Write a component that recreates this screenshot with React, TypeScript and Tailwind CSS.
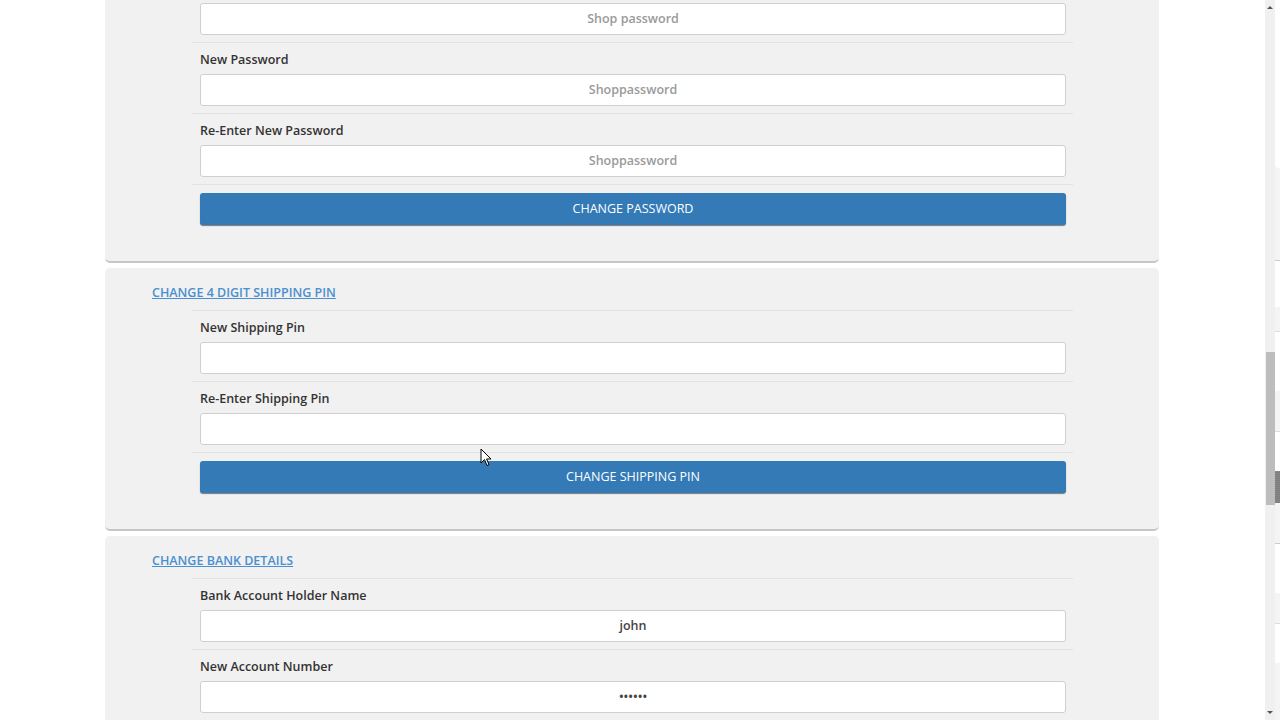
import type { ReactNode } from 'react';

const font = { fontFamily: '"Open Sans", "Noto Sans", sans-serif' };

function Row({ label, children }: { label?: string; children: ReactNode }) {
  return (
    <div className="border-t border-[#e2e2e2] pl-2 pr-[7px] pt-2 pb-[7px]">
      <p className="mb-[5px] h-[18px] text-[12.5px] font-semibold leading-[18px] text-[#333]">{label}</p>
      {children}
    </div>
  );
}

function Field({ value, placeholder }: { value?: string; placeholder?: string }) {
  return (
    <div className="flex h-[32px] items-center justify-center rounded-[3px] border border-[#cfcfcf] bg-white text-[12.5px] font-semibold">
      {value ? (
        <span className="text-[#444]">{value}</span>
      ) : (
        <span className="text-[#9a9a9a]">{placeholder}</span>
      )}
    </div>
  );
}

function Submit({ children }: { children: ReactNode }) {
  return (
    <div className="border-t border-[#e2e2e2] pl-2 pr-[7px] pt-2">
      <button className="flex h-[32px] w-full items-center justify-center rounded-[3px] bg-[#337ab7] text-[12.5px] text-white shadow-[0_1px_1px_rgba(0,0,0,0.5)]">
        {children}
      </button>
    </div>
  );
}

function Panel({ title, children, last }: { title?: string; children: ReactNode; last?: boolean }) {
  return (
    <section className={`rounded-[5px] border-b-2 border-[#c6c6c6] bg-[#f1f1f1] pt-4 ${last ? 'pb-0' : 'pb-[36px]'}`}>
      <a href="#" className="mb-2 ml-[47px] block h-[18px] text-[12.5px] font-semibold leading-[18px] text-[#4a8fd0] underline">
        {title}
      </a>
      <div className="ml-[87px] w-[881px]">{children}</div>
    </section>
  );
}

function Scrollbar() {
  return (
    <div className="flex h-full w-[15px] shrink-0">
      <div className="flex h-full w-[10px] flex-col items-center bg-[#f0f0f0]">
        <div className="mt-[6px] h-0 w-0 border-x-[3px] border-b-[3px] border-x-transparent border-b-[#555]" />
        <div className="mt-[343px] h-[153px] w-[9px] bg-[#bdbdbd]" />
        <div className="mt-auto mb-[6px] h-0 w-0 border-x-[3px] border-t-[3px] border-x-transparent border-t-[#555]" />
      </div>
      <div className="flex h-full w-[5px] flex-col bg-[#f4f4f4]">
        <div className="h-[168px] rounded-bl bg-white" />
        <div className="mt-[92px] h-[47px] border-t border-[#ccc] bg-white" />
        <div className="mt-[24px] h-[60px] border-t border-[#ddd] bg-white" />
        <div className="mt-[40px] h-[40px] border-t border-[#ddd] bg-white" />
        <div className="h-[32px] bg-[repeating-linear-gradient(#8a8a6a_0,#8a8a6a_1px,#7a7a9a_1px,#7a7a9a_2px)]" />
        <div className="mt-[40px] h-[50px] border-t border-[#ccc] bg-white" />
        <div className="mt-[30px] h-[40px] border-t border-[#ddd] bg-white" />
      </div>
    </div>
  );
}

export default function App() {
  return (
    <div className="flex h-[720px] w-[1280px] overflow-hidden bg-white" style={font}>
      <div className="relative h-full flex-1 overflow-hidden">
        <div className="ml-[105px] -mt-[71px] flex w-[1054px] flex-col gap-[5px]">
          <Panel>
            <Row><Field placeholder="Shop password" /></Row>
            <Row label="New Password"><Field placeholder="Shoppassword" /></Row>
            <Row label="Re-Enter New Password"><Field placeholder="Shoppassword" /></Row>
            <Submit>CHANGE PASSWORD</Submit>
          </Panel>
          <Panel title="CHANGE 4 DIGIT SHIPPING PIN">
            <Row label="New Shipping Pin"><Field /></Row>
            <Row label="Re-Enter Shipping Pin"><Field /></Row>
            <Submit>CHANGE SHIPPING PIN</Submit>
          </Panel>
          <Panel title="CHANGE BANK DETAILS" last>
            <Row label="Bank Account Holder Name"><Field value="john" /></Row>
            <Row label="New Account Number"><Field value="••••••" /></Row>
            <div className="h-[40px] border-t border-[#e2e2e2]" />
          </Panel>
        </div>
        <svg className="absolute left-[480px] top-[448px]" width="12" height="19" viewBox="0 0 12 19">
          <path d="M1 1 L1 15 L4.5 11.5 L7 17.5 L9 16.6 L6.6 11 L11 11 Z" fill="white" stroke="black" strokeWidth="1" strokeLinejoin="round" />
        </svg>
      </div>
      <Scrollbar />
    </div>
  );
}
